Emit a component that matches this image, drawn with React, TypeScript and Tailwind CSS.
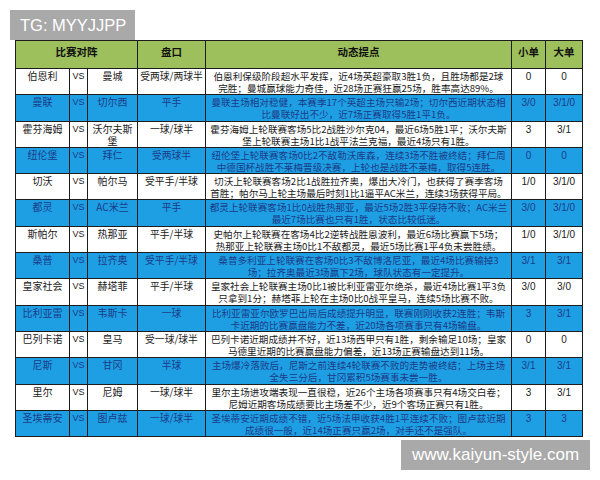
import React from "react";

type Row = {
  a: string;
  b: string;
  pan: string;
  l1: string;
  l2: string;
  s: string;
  d: string;
  blue: boolean;
  bWrap?: string[];
};

const rows: Row[] = [
  { a: "伯恩利", b: "曼城", pan: "受两球/两球半", l1: "伯恩利保级阶段超水平发挥，近4场英超豪取3胜1负，且胜场都是2球", l2: "完胜；曼城赢球能力奇佳，近28场正赛狂赢25场，胜率高达89%。", s: "0", d: "0", blue: false },
  { a: "曼联", b: "切尔西", pan: "平手", l1: "曼联主场相对稳健，本赛季17个英超主场只输2场；切尔西近期状态相", l2: "比曼联好出不少，近7场正赛取得5胜1平1负。", s: "3/0", d: "3/1/0", blue: true },
  { a: "霍芬海姆", b: "沃尔夫斯堡", bWrap: ["沃尔夫斯", "堡"], pan: "一球/球半", l1: "霍芬海姆上轮联赛客场5比2战胜沙尔克04，最近6场5胜1平；沃尔夫斯", l2: "堡上轮联赛主场1比1战平法兰克福，最近4场只有1胜。", s: "3", d: "3/1", blue: false },
  { a: "纽伦堡", b: "拜仁", pan: "受两球半", l1: "纽伦堡上轮联赛客场0比2不敌勒沃库森，连续3场不胜被终结；拜仁周", l2: "中德国杯战胜不莱梅晋级决赛，上轮也是战胜不莱梅，取得5连胜。", s: "0", d: "0", blue: true },
  { a: "切沃", b: "帕尔马", pan: "受平手/半球", l1: "切沃上轮联赛客场2比1战胜拉齐奥，爆出大冷门，也获得了赛季客场", l2: "首胜；帕尔马上轮主场最后时刻1比1逼平AC米兰，连续3场获得平局。", s: "1/0", d: "3/1/0", blue: false },
  { a: "都灵", b: "AC米兰", pan: "平手", l1: "都灵上轮联赛客场1比0战胜热那亚，最近5场2胜3平保持不败；AC米兰", l2: "最近7场比赛也只有1胜，状态比较低迷。", s: "3/0", d: "3/1/0", blue: true },
  { a: "斯帕尔", b: "热那亚", pan: "平手/半球", l1: "史帕尔上轮联赛在客场4比2逆转战胜恩波利，最近6场比赛赢下5场；", l2: "热那亚上轮联赛主场0比1不敌都灵，最近5场比赛1平4负未尝胜绩。", s: "1/0", d: "3/1/0", blue: false },
  { a: "桑普", b: "拉齐奥", pan: "受平手/半球", l1: "桑普多利亚上轮联赛在客场0比3不敌博洛尼亚，最近4场比赛输掉3", l2: "场；拉齐奥最近3场赢下2场，球队状态有一定提升。", s: "3/1", d: "3/1", blue: true },
  { a: "皇家社会", b: "赫塔菲", pan: "平手/半球", l1: "皇家社会上轮联赛主场0比1被比利亚雷亚尔绝杀，最近4场比赛1平3负", l2: "只拿到1分；赫塔菲上轮在主场0比0战平皇马，连续5场比赛不败。", s: "3/0", d: "3/0", blue: false },
  { a: "比利亚雷", b: "韦斯卡", pan: "一球", l1: "比利亚雷亚尔欧罗巴出局后成绩提升明显，联赛刚刚收获2连胜；韦斯", l2: "卡近期的比赛赢盘能力不差，近20场各项赛事只有4场输盘。", s: "3", d: "3/1", blue: true },
  { a: "巴列卡诺", b: "皇马", pan: "受一球/球半", l1: "巴列卡诺近期成绩并不好，近13场西甲只有1胜，剩余输足10场；皇家", l2: "马德里近期的比赛赢盘能力偏差，近13场正赛输盘达到11场。", s: "0", d: "0", blue: false },
  { a: "尼斯", b: "甘冈", pan: "半球", l1: "主场爆冷落败后，尼斯之前连续4轮联赛不败的走势被终结；上场主场", l2: "全失三分后，甘冈累积5场赛事未尝一胜。", s: "3/1", d: "3/1", blue: true },
  { a: "里尔", b: "尼姆", pan: "一球/球半", l1: "里尔主场进攻端表现一直很稳，近26个主场各项赛事只有4场交白卷；", l2: "尼姆近期客场成绩要比主场差不少，近9个客场正赛只有1胜。", s: "3", d: "3/1", blue: false },
  { a: "圣埃蒂安", b: "图卢兹", pan: "一球/球半", l1: "圣埃蒂安近期成绩不错，近5场法甲收获4胜1平连续不败；图卢兹近期", l2: "成绩很一般，近14场正赛只赢2场，对手还不是强队。", s: "3", d: "3", blue: true },
];

const cjk = { fontFamily: '"Noto Sans CJK SC", "Noto Sans", sans-serif' };
const lat = { fontFamily: '"Liberation Sans", Arial, sans-serif' };

function Cell({ blue, children, className = "" }: { blue: boolean; children: React.ReactNode; className?: string }) {
  return (
    <div
      className={`${blue ? "bg-[#1e9fe4] text-[#1c3c88]" : "bg-white text-[#1a1a1a]"} overflow-hidden text-center leading-[12px] ${className}`}
    >
      {children}
    </div>
  );
}

export default function App() {
  return (
    <div className="w-[600px] h-[480px] bg-white overflow-hidden pt-[10px]" style={cjk}>
      <div className="ml-[10px] w-[125px] h-[30px] bg-[#a9a9a9] text-white text-[16.5px] leading-[30px] pl-[10px]" style={lat}>
        TG: MYYJJPP
      </div>
      <div className="ml-[15px] w-[568px] bg-[#1c1c1c] p-px grid gap-px grid-cols-[53px_17px_49px_67px_305px_33px_36px] grid-rows-[27px_repeat(14,25.3px)]">
        <div className="col-span-3 bg-[#9dbf5c] text-[10.5px] font-bold text-center pt-[4px] leading-[14px] text-[#111]">比赛对阵</div>
        <div className="bg-[#9dbf5c] text-[10.5px] font-bold text-center pt-[4px] leading-[14px] text-[#111]">盘口</div>
        <div className="bg-[#9dbf5c] text-[10.5px] font-bold text-center pt-[4px] leading-[14px] text-[#111]">动态提点</div>
        <div className="bg-[#9dbf5c] text-[10.5px] font-bold text-center pt-[4px] leading-[14px] text-[#111]">小单</div>
        <div className="bg-[#9dbf5c] text-[10.5px] font-bold text-center pt-[4px] leading-[14px] text-[#111]">大单</div>
        {rows.map((r, i) => (
          <React.Fragment key={i}>
            <Cell blue={r.blue} className="text-[10px] pt-[1px] whitespace-nowrap">{r.a}</Cell>
            <Cell blue={r.blue} className="text-[9px] pt-[1px]">
              <span style={lat}>VS</span>
            </Cell>
            <Cell blue={r.blue} className="text-[10px] pt-[1px]">
              {r.bWrap ? (
                <>
                  <div>{r.bWrap[0]}</div>
                  <div>{r.bWrap[1]}</div>
                </>
              ) : (
                r.b
              )}
            </Cell>
            <Cell blue={r.blue} className="text-[9.8px] pt-[1px] whitespace-nowrap">{r.pan}</Cell>
            <Cell blue={r.blue} className="text-[9.6px] pt-[1px] whitespace-nowrap">
              <div>{r.l1}</div>
              <div>{r.l2}</div>
            </Cell>
            <Cell blue={r.blue} className="text-[10px] pt-[1px]">
              <span style={lat}>{r.s}</span>
            </Cell>
            <Cell blue={r.blue} className="text-[10px] pt-[1px]">
              <span style={lat}>{r.d}</span>
            </Cell>
          </React.Fragment>
        ))}
      </div>
      <div className="ml-[401px] mt-[3px] w-[189px] h-[30px] bg-[#a9a9a9] text-white text-[17px] leading-[30px] text-center" style={lat}>
        www.kaiyun-style.com
      </div>
    </div>
  );
}
